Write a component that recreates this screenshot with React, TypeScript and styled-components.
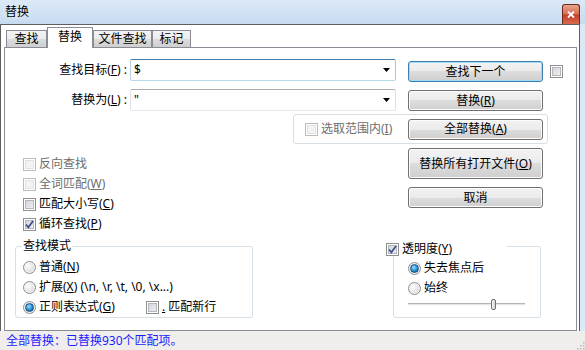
import React from 'react';
import styled, { createGlobalStyle } from 'styled-components';

const GlobalStyle = createGlobalStyle`
  html, body {
    margin: 0;
    padding: 0;
  }
  body {
    width: 585px;
    height: 350px;
    overflow: hidden;
    font-family: "Noto Sans", "Noto Sans CJK SC", sans-serif;
    font-size: 12px;
    color: #000;
    background: #dce8f5;
  }
  * {
    box-sizing: border-box;
  }
`;

const Window = styled.div`
  width: 585px;
  height: 350px;
  display: flex;
  flex-direction: column;
  background: #dce8f5;
`;

const TitleBar = styled.div`
  height: 24px;
  display: flex;
  align-items: center;
  padding-left: 5px;
  background: linear-gradient(#dce9f7, #c6daf0);
  line-height: 14px;
  text-shadow: 0 0 6px #fff;
`;

const CloseButton = styled.div`
  margin-left: auto;
  margin-right: 5px;
  align-self: flex-end;
  width: 18px;
  height: 20px;
  display: flex;
  align-items: center;
  justify-content: center;
  border: 1px solid #6d2a1b;
  border-bottom: none;
  border-radius: 3px 3px 0 0;
  background: linear-gradient(#eaa48f, #d86f55 45%, #c4422a 55%, #d8694d);
`;

const ClientRow = styled.div`
  height: 307px;
  display: flex;
`;

const Client = styled.div`
  width: 580px;
  height: 100%;
  background: #fff;
  border: 1px solid #5f5f5f;
  border-bottom: none;
`;

const TabStrip = styled.div`
  height: 22px;
  display: flex;
  align-items: flex-end;
  padding-left: 5px;
`;

const Tab = styled.div<{ $active?: boolean; $w: number }>`
  position: relative;
  z-index: ${(p) => (p.$active ? 1 : 0)};
  width: ${(p) => p.$w}px;
  height: ${(p) => (p.$active ? 21 : 17)}px;
  margin-bottom: ${(p) => (p.$active ? -1 : 0)}px;
  display: flex;
  align-items: center;
  justify-content: center;
  border: 1px solid #898c95;
  border-bottom: none;
  background: ${(p) =>
    p.$active
      ? '#fff'
      : 'linear-gradient(#f3f3f3, #ebebeb 50%, #dddddd 50%, #cfcfcf)'};
  line-height: 14px;
  padding-bottom: ${(p) => (p.$active ? 2 : 0)}px;
`;

const Panel = styled.div`
  margin-left: 3px;
  width: 573px;
  height: 284px;
  border: 1px solid #898c95;
  padding-top: 11px;
`;

const FieldRow = styled.div<{ $mt?: number }>`
  display: flex;
  align-items: flex-start;
  height: 22px;
  margin-top: ${(p) => p.$mt ?? 0}px;
`;

const FieldLabel = styled.div`
  width: 123px;
  padding-right: 1px;
  text-align: right;
  line-height: 22px;
  white-space: nowrap;
`;

const Combo = styled.div<{ $focused?: boolean }>`
  margin-left: 2px;
  width: 266px;
  height: 22px;
  display: flex;
  align-items: center;
  justify-content: space-between;
  padding: 0 5px 0 3px;
  background: #fff;
  border: 1px solid;
  border-radius: 2px;
  border-color: ${(p) =>
    p.$focused
      ? '#3d7bad #a4c9e3 #b7d9ed #b5cfe7'
      : '#abadb3 #dbdfe6 #e3e9ef #e2e3ea'};
  line-height: 20px;
`;

const ButtonSlot = styled.div<{ $ml?: number; $mt?: number }>`
  margin-left: ${(p) => p.$ml ?? 0}px;
  margin-top: ${(p) => p.$mt ?? 0}px;
`;

const Button = styled.button<{ $h?: number; $focused?: boolean }>`
  display: block;
  width: 135px;
  height: ${(p) => p.$h ?? 21}px;
  padding: 0;
  font: inherit;
  line-height: 14px;
  color: #000;
  border: 1px solid ${(p) => (p.$focused ? '#3c7fb1' : '#707070')};
  border-radius: 3px;
  background: linear-gradient(#f2f2f2, #ebebeb 50%, #dddddd 50%, #cfcfcf);
  box-shadow: inset 0 0 0 1px ${(p) => (p.$focused ? '#9fdcf8' : '#fcfcfc')};
`;

const Box = styled.span<{ $disabled?: boolean }>`
  flex: none;
  width: 13px;
  height: 13px;
  display: flex;
  align-items: center;
  justify-content: center;
  border: 1px solid ${(p) => (p.$disabled ? '#bcbcbc' : '#8e8f8f')};
  background: ${(p) =>
    p.$disabled ? '#f3f3f3' : 'linear-gradient(135deg, #cbcfd5, #f6f6f6)'};
  box-shadow: inset 0 0 0 1px #fff,
    inset 0 0 0 2px ${(p) => (p.$disabled ? '#e2e2e2' : '#b3b7bd')};
`;

const Round = styled.span<{ $on?: boolean }>`
  flex: none;
  width: 13px;
  height: 13px;
  border-radius: 50%;
  display: flex;
  align-items: center;
  justify-content: center;
  border: 1px solid #8c8f91;
  background: radial-gradient(circle at 35% 35%, #fdfdfd 0, #e4e4e4 55%, #c6c8cb 100%);
  box-shadow: inset 0 0 0 1px #f4f4f4;

  &::after {
    content: '';
    display: ${(p) => (p.$on ? 'block' : 'none')};
    width: 7px;
    height: 7px;
    border-radius: 50%;
    border: 1px solid #1c4e7f;
    background: radial-gradient(circle at 40% 35%, #9adffc 0, #2b93d6 50%, #14568f 100%);
  }
`;

const OptionRow = styled.div<{ $disabled?: boolean; $w?: number; $h?: number }>`
  display: flex;
  align-items: center;
  gap: 3px;
  height: ${(p) => p.$h ?? 20}px;
  width: ${(p) => (p.$w ? `${p.$w}px` : 'auto')};
  color: ${(p) => (p.$disabled ? '#6d6d6d' : '#000')};
  line-height: 14px;
  white-space: nowrap;
`;

const Key = styled.span`
  text-decoration: underline;
`;

const SelectionBox = styled.div`
  margin: 3px 0 0 288px;
  width: 255px;
  height: 30px;
  display: flex;
  align-items: center;
  padding: 0 4px 0 11px;
  border: 1px solid #d5dfe5;
  border-radius: 3px;

  & > ${ButtonSlot} {
    margin-left: auto;
  }
`;

const Middle = styled.div`
  display: flex;
  align-items: flex-start;
`;

const LeftColumn = styled.div`
  margin: 10px 0 0 18px;
  width: 385px;
  display: flex;
  flex-direction: column;
`;

const RightColumn = styled.div`
  margin-top: 4px;
  display: flex;
  flex-direction: column;
  gap: 8px;
`;

const Bottom = styled.div`
  margin-top: 3px;
  display: flex;
  align-items: flex-end;
`;

const GroupBox = styled.fieldset<{ $ml: number; $w: number; $h: number }>`
  margin: 0 0 0 ${(p) => p.$ml}px;
  padding: 0;
  min-width: 0;
  width: ${(p) => p.$w}px;
  height: ${(p) => p.$h}px;
  border: 1px solid #d5dfe5;
  border-radius: 3px;
`;

const Legend = styled.legend`
  margin-left: 6px;
  padding: 0 1px;
  line-height: 14px;
`;

const CheckLegend = styled.legend`
  margin-left: -8px;
  width: 121px;
  padding: 5px 0 0 0;
  display: flex;
  align-items: center;
  gap: 3px;
  line-height: 14px;
  background: #fff;
`;

const GroupBody = styled.div<{ $pt: number; $pl: number }>`
  display: flex;
  flex-direction: column;
  padding: ${(p) => p.$pt}px 0 0 ${(p) => p.$pl}px;
`;

const InlineRow = styled.div`
  display: flex;
  align-items: center;
`;

const Slider = styled.div`
  position: relative;
  width: 117px;
  height: 11px;
  margin-top: 1px;
`;

const Track = styled.div`
  position: absolute;
  left: 0;
  right: 0;
  top: 4px;
  height: 3px;
  border-top: 1px solid #b4b4b4;
  border-bottom: 1px solid #fafafa;
  background: #e3e5e6;
`;

const Thumb = styled.div`
  position: absolute;
  top: 0;
  width: 5px;
  height: 11px;
  border: 1px solid #707070;
  border-radius: 2px;
  background: linear-gradient(90deg, #f6f6f6, #d2d2d2);
`;

const StatusBar = styled.div`
  height: 19px;
  display: flex;
  align-items: center;
  padding-left: 6px;
  background: #f0eeec;
  color: #1c1cff;
  line-height: 14px;
`;

const Grip = styled.svg`
  margin-left: auto;
  align-self: flex-end;
`;

const Check = () => (
  <svg width="9" height="9" viewBox="0 0 9 9">
    <path d="M1 4.5 L3.4 7.3 L8 1" fill="none" stroke="#3c4f8c" strokeWidth="1.7" />
  </svg>
);

const CheckBox = ({ checked, disabled }: { checked?: boolean; disabled?: boolean }) => (
  <Box $disabled={disabled}>{checked && <Check />}</Box>
);

const Arrow = () => (
  <svg width="7" height="4" viewBox="0 0 7 4">
    <polygon points="0,0 7,0 3.5,4" fill="#000" />
  </svg>
);

const tabs = [
  { label: '查找', w: 41 },
  { label: '替换', w: 46, active: true },
  { label: '文件查找', w: 59 },
  { label: '标记', w: 39 },
];

const sliderValue = 74;

export default function App() {
  return (
    <Window>
      <GlobalStyle />
      <TitleBar>
        替换
        <CloseButton>
          <svg width="8" height="7" viewBox="0 0 8 7">
            <path d="M1 0.5 L7 6.5 M7 0.5 L1 6.5" stroke="#fff" strokeWidth="1.8" />
          </svg>
        </CloseButton>
      </TitleBar>
      <ClientRow>
        <Client>
          <TabStrip>
            {tabs.map((t) => (
              <Tab key={t.label} $w={t.w} $active={t.active}>
                {t.label}
              </Tab>
            ))}
          </TabStrip>
          <Panel>
            <FieldRow>
              <FieldLabel>
                查找目标(<Key>F</Key>) :
              </FieldLabel>
              <Combo $focused>
                <span>$</span>
                <Arrow />
              </Combo>
              <ButtonSlot $ml={12} $mt={2}>
                <Button $focused>查找下一个</Button>
              </ButtonSlot>
              <ButtonSlot $ml={7} $mt={6}>
                <CheckBox />
              </ButtonSlot>
            </FieldRow>
            <FieldRow $mt={8}>
              <FieldLabel>
                替换为(<Key>L</Key>) :
              </FieldLabel>
              <Combo>
                <span>"</span>
                <Arrow />
              </Combo>
              <ButtonSlot $ml={12} $mt={1}>
                <Button>
                  替换(<Key>R</Key>)
                </Button>
              </ButtonSlot>
            </FieldRow>
            <SelectionBox>
              <OptionRow $disabled>
                <CheckBox disabled />
                <span>
                  选取范围内(<Key>I</Key>)
                </span>
              </OptionRow>
              <ButtonSlot>
                <Button>
                  全部替换(<Key>A</Key>)
                </Button>
              </ButtonSlot>
            </SelectionBox>
            <Middle>
              <LeftColumn>
                <OptionRow $disabled>
                  <CheckBox disabled />
                  <span>反向查找</span>
                </OptionRow>
                <OptionRow $disabled>
                  <CheckBox disabled />
                  <span>
                    全词匹配(<Key>W</Key>)
                  </span>
                </OptionRow>
                <OptionRow>
                  <CheckBox />
                  <span>
                    匹配大小写(<Key>C</Key>)
                  </span>
                </OptionRow>
                <OptionRow>
                  <CheckBox checked />
                  <span>
                    循环查找(<Key>P</Key>)
                  </span>
                </OptionRow>
              </LeftColumn>
              <RightColumn>
                <Button $h={31}>
                  替换所有打开文件(<Key>O</Key>)
                </Button>
                <Button>取消</Button>
              </RightColumn>
            </Middle>
            <Bottom>
              <GroupBox $ml={10} $w={238} $h={79}>
                <Legend>查找模式</Legend>
                <GroupBody $pt={4} $pl={7}>
                  <OptionRow>
                    <Round />
                    <span>
                      普通(<Key>N</Key>)
                    </span>
                  </OptionRow>
                  <OptionRow>
                    <Round />
                    <span>
                      扩展(<Key>X</Key>) (\n, \r, \t, \0, \x...)
                    </span>
                  </OptionRow>
                  <InlineRow>
                    <OptionRow $w={123}>
                      <Round $on />
                      <span>
                        正则表达式(<Key>G</Key>)
                      </span>
                    </OptionRow>
                    <OptionRow>
                      <CheckBox />
                      <span>
                        <Key>.</Key> 匹配新行
                      </span>
                    </OptionRow>
                  </InlineRow>
                </GroupBody>
              </GroupBox>
              <GroupBox $ml={140} $w={148} $h={81}>
                <CheckLegend>
                  <CheckBox checked />
                  <span>
                    透明度(<Key>Y</Key>)
                  </span>
                </CheckLegend>
                <GroupBody $pt={2} $pl={14}>
                  <OptionRow>
                    <Round $on />
                    <span>失去焦点后</span>
                  </OptionRow>
                  <OptionRow>
                    <Round />
                    <span>始终</span>
                  </OptionRow>
                  <Slider>
                    <Track />
                    <Thumb style={{ left: `${((117 - 5) * sliderValue) / 100}px` }} />
                  </Slider>
                </GroupBody>
              </GroupBox>
            </Bottom>
          </Panel>
        </Client>
      </ClientRow>
      <StatusBar>
        全部替换：已替换930个匹配项。
        <Grip width="10" height="10" viewBox="0 0 10 10">
          {[
            [8, 2],
            [8, 5],
            [8, 8],
            [5, 5],
            [5, 8],
            [2, 8],
          ].map(([x, y]) => (
            <rect key={`${x}-${y}`} x={x} y={y} width="1.5" height="1.5" fill="#b8b6b4" />
          ))}
        </Grip>
      </StatusBar>
    </Window>
  );
}
